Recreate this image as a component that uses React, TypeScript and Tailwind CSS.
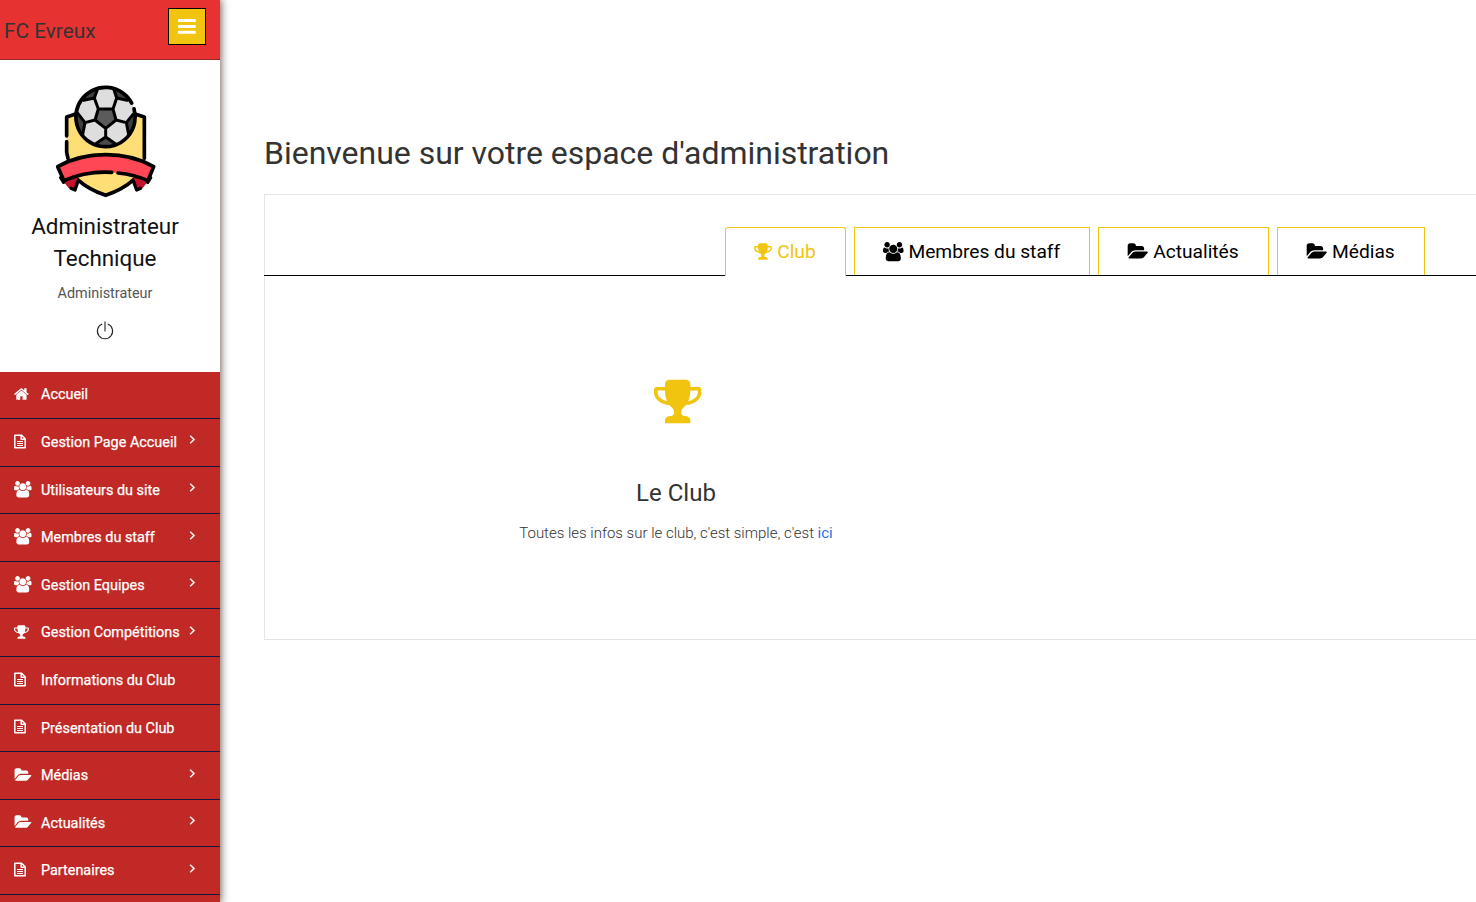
import React from "react";

type IconName = "home" | "file" | "users" | "trophy" | "folder" | "bars" | "angle";

const ICONS: Record<Exclude<IconName, "file">, { box: string; ratio: number; d: string }> = {
  home: {
    box: "64 0 1664 1792",
    ratio: 1664 / 1792,
    d: "M1472 992v480q0 26-19 45t-45 19h-384v-384h-256v384h-384q-26 0-45-19t-19-45v-480q0-1 .5-3t.5-3l575-474 575 474q1 2 1 6zm223-69l-62 74q-8 9-21 11h-3q-13 0-21-7l-692-577-692 577q-12 8-24 7-13-2-21-11l-62-74q-8-10-7-23.5t11-21.5l719-599q32-26 76-26t76 26l244 204v-195q0-14 9-23t23-9h192q14 0 23 9t9 23v408l219 182q10 8 11 21.5t-7 23.5z",
  },
  users: {
    box: "64 0 1920 1792",
    ratio: 1920 / 1792,
    d: "M657 896q-162 5-265 128h-134q-82 0-138-40.5t-56-118.5q0-353 124-353 6 0 43.5 21t97.5 42.5 119 21.5q67 0 133-23-5 37-5 66 0 139 81 256zm1071 637q0 120-73 189.5t-194 69.5h-874q-121 0-194-69.5t-73-189.5q0-53 3.5-103.5t14-109 26.5-108.5 43-97.5 62-81 85.5-53.5 111.5-20q10 0 43 21.5t73 48 107 48 135 21.5 135-21.5 107-48 73-48 43-21.5q61 0 111.5 20t85.5 53.5 62 81 43 97.5 26.5 108.5 14 109 3.5 103.5zm-1024-1277q0 106-75 181t-181 75-181-75-75-181 75-181 181-75 181 75 75 181zm704 384q0 159-112.5 271.5t-271.5 112.5-271.5-112.5-112.5-271.5 112.5-271.5 271.5-112.5 271.5 112.5 112.5 271.5zm576 225q0 78-56 118.5t-138 40.5h-134q-103-123-265-128 81-117 81-256 0-29-5-66 66 23 133 23 59 0 119-21.5t97.5-42.5 43.5-21q124 0 124 353zm-128-609q0 106-75 181t-181 75-181-75-75-181 75-181 181-75 181 75 75 181z",
  },
  trophy: {
    box: "64 0 1664 1792",
    ratio: 1664 / 1792,
    d: "M522 883q-74-162-74-371h-256v96q0 78 94.5 162t235.5 113zm1078-275v-96h-256q0 209-74 371 141-29 235.5-113t94.5-162zm128-128v128q0 71-41.5 143t-112 130-173 97.5-215.5 44.5q-42 54-95 95-38 34-52.5 72.5t-14.5 89.5q0 54 30.5 91t97.5 37q75 0 133.5 45.5t58.5 114.5v64q0 14-9 23t-23 9h-832q-14 0-23-9t-9-23v-64q0-69 58.5-114.5t133.5-45.5q67 0 97.5-37t30.5-91q0-51-14.5-89.5t-52.5-72.5q-53-41-95-95-113-5-215.5-44.5t-173-97.5-112-130-41.5-143v-128q0-40 28-68t68-28h288v-96q0-66 47-113t113-47h576q66 0 113 47t47 113v96h288q40 0 68 28t28 68z",
  },
  folder: {
    box: "0 0 1943 1792",
    ratio: 1943 / 1792,
    d: "M1943 952q0 31-31 66l-336 396q-43 51-120.5 86.5t-143.5 35.5h-1088q-34 0-60.5-13t-26.5-43q0-31 31-66l336-396q43-51 120.5-86.5t143.5-35.5h1088q34 0 60.5 13t26.5 43zm-343-344v160h-832q-94 0-197 47.5t-164 119.5l-337 396-5 6q0-4-.5-12.5t-.5-12.5v-960q0-92 66-158t158-66h320q92 0 158 66t66 158v32h544q92 0 158 66t66 158z",
  },
  bars: {
    box: "128 0 1536 1792",
    ratio: 1536 / 1792,
    d: "M1664 1344v128q0 26-19 45t-45 19h-1408q-26 0-45-19t-19-45v-128q0-26 19-45t45-19h1408q26 0 45 19t19 45zm0-512v128q0 26-19 45t-45 19h-1408q-26 0-45-19t-19-45v-128q0-26 19-45t45-19h1408q26 0 45 19t19 45zm0-512v128q0 26-19 45t-45 19h-1408q-26 0-45-19t-19-45v-128q0-26 19-45t45-19h1408q26 0 45 19t19 45z",
  },
  angle: {
    box: "576 0 640 1792",
    ratio: 640 / 1792,
    d: "M1171 960q0 13-10 23l-466 466q-10 10-23 10t-23-10l-50-50q-10-10-10-23t10-23l393-393-393-393q-10-10-10-23t10-23l50-50q10-10 23-10t23 10l466 466q10 10 10 23z",
  },
};

function Icon({ name, size, className = "" }: { name: IconName; size: number; className?: string }) {
  if (name === "file") {
    return (
      <svg
        width="12"
        height="15"
        viewBox="0 0 12 15"
        fill="none"
        stroke="currentColor"
        strokeLinejoin="round"
        className={`shrink-0 ${className}`}
        aria-hidden="true"
      >
        <path d="M.8 1.2H7.6L11.2 4.8V13.8H.8ZM7.2 1.2V5.2H11.2" strokeWidth="1.5" />
        <path d="M3 7.5H9M3 9.5H9M3 11.5H9" strokeWidth="1" />
      </svg>
    );
  }
  const icon = ICONS[name];
  return (
    <svg
      width={size * icon.ratio}
      height={size}
      viewBox={icon.box}
      fill="currentColor"
      className={`shrink-0 overflow-visible ${className}`}
      aria-hidden="true"
    >
      <path d={icon.d} />
    </svg>
  );
}

function Crest() {
  return (
    <svg width="120" height="130" viewBox="0 0 360 390" aria-hidden="true" strokeLinecap="round" strokeLinejoin="round">
      <path d="M65 126 L100 113 H260 L298 126 V250 C298 310 240 340 182 361 C124 340 65 310 65 250Z" fill="#ffde76" />
      <path d="M65 183V126L92 117M270 117L298 126V250M65 200V232L69 250M97 313C120 334 150 350 182 361C214 350 244 334 267 313" fill="none" stroke="#000" strokeWidth="11" />
      <path d="M47 308 L93 296 L99 317 L90 345 L70 338Z" fill="#c4122f" />
      <path d="M317 308 L271 296 L265 317 L275 345 L294 338Z" fill="#c4122f" />
      <path d="M47 308L56 322M99 318L90 345L78 340M317 308L308 322M265 318L275 345L287 340" fill="none" stroke="#000" strokeWidth="10" />
      <path d="M38 275C80 251 130 239 182 239C234 239 284 251 326 275L309 317C270 300 226 292 182 292C138 292 96 300 57 317Z" fill="#ff4755" />
      <path d="M200 292C150 289 100 298 57 317L38 275C80 251 130 239 182 239C234 239 284 251 326 275L309 317C280 304 250 297 219 294" fill="none" stroke="#000" strokeWidth="11" />
      <circle cx="181.5" cy="126" r="89" fill="#dedede" />
      <path d="M160 102H204L213 135L182 160L150 135Z" fill="#5b5b5b" />
      <path d="M117 60C128 49 139 43 158 39L149 68L117 75Z" fill="#3f3f3f" />
      <path d="M206 39C224 43 237 50 250 62L243 75L214 68Z" fill="#3f3f3f" />
      <path d="M95 112L119 142L112 176C98 159 92 141 95 112Z" fill="#3f3f3f" />
      <path d="M269 112L245 142L252 176C266 159 272 141 269 112Z" fill="#3f3f3f" />
      <path d="M182 186L212 208C192 216 172 216 151 208Z" fill="#4a4a4a" />
      <path
        d="M160 102H204L213 135L182 160L150 135ZM160 102L148 69L158 41M148 69L116 76M204 102L215 69L206 41M215 69L246 76M150 135L120 143L96 112M120 143L113 178M213 135L244 143L264 118M244 143L251 178M182 160V186M182 186L150 208M182 186L213 208"
        fill="none"
        stroke="#000"
        strokeWidth="9"
      />
      <path d="M260.1 84.2A89 89 0 1 0 267.1 101.5" fill="none" stroke="#000" strokeWidth="11" />
    </svg>
  );
}

const MENU: { icon: IconName; label: string; arrow?: boolean }[] = [
  { icon: "home", label: "Accueil" },
  { icon: "file", label: "Gestion Page Accueil", arrow: true },
  { icon: "users", label: "Utilisateurs du site", arrow: true },
  { icon: "users", label: "Membres du staff", arrow: true },
  { icon: "users", label: "Gestion Equipes", arrow: true },
  { icon: "trophy", label: "Gestion Compétitions", arrow: true },
  { icon: "file", label: "Informations du Club" },
  { icon: "file", label: "Présentation du Club" },
  { icon: "folder", label: "Médias", arrow: true },
  { icon: "folder", label: "Actualités", arrow: true },
  { icon: "file", label: "Partenaires", arrow: true },
  { icon: "file", label: "" },
];

function Sidebar() {
  return (
    <aside className="z-10 flex h-full w-[220px] shrink-0 flex-col overflow-hidden bg-[#c12926]">
      <header className="flex h-[60px] shrink-0 items-start justify-between border-b border-[#8f2a28] bg-[#e63230] pr-[14px] pl-1">
        <span className="pt-[15px] text-[20.8px] leading-8 text-[#333]">FC Evreux</span>
        <button className="mt-2 flex h-[37px] w-[38px] items-center justify-center border border-black bg-[#f1c40f] text-white">
          <Icon name="bars" size={20.8} className="-mt-px" />
        </button>
      </header>
      <section className="flex h-[311.6px] shrink-0 flex-col items-center bg-white pr-[10px]">
        <div className="mt-[15px] h-[130px] w-[120px]">
          <Crest />
        </div>
        <h2 className="mt-[5px] w-[180px] text-center text-[22.4px] leading-8 text-[#111]">
          Administrateur Technique
        </h2>
        <p className="mt-[10px] text-[14.4px] leading-5 text-[#555]">Administrateur</p>
        <svg width="18" height="20" viewBox="0 0 18 20" fill="none" stroke="#222" className="mt-[17px] mr-px" aria-hidden="true">
          <path d="M6.2 3.1A7.6 7.6 0 1 0 11.8 3.1M9 .5V10.5" strokeWidth="1.1" />
        </svg>
      </section>
      <nav>
        {MENU.map((item, i) => (
          <a key={i} className="flex h-[47.58px] items-center border-b border-[#14173f] pl-[14px] text-white">
            <span className="-mt-[2px] flex w-[27px] items-center">
              <Icon name={item.icon} size={item.icon === "users" ? 16.4 : 16} className={item.icon === "folder" ? "-ml-[0.5px]" : ""} />
            </span>
            <span className="w-[148.5px] pt-[0.8px] text-[14.4px] whitespace-nowrap [-webkit-text-stroke:0.25px_white]">
              {item.label}
            </span>
            {item.arrow && <Icon name="angle" size={14} className="-mt-[6px] stroke-current stroke-[70px]" />}
          </a>
        ))}
      </nav>
    </aside>
  );
}

const TABS: { icon: IconName; label: string; width: string }[] = [
  { icon: "trophy", label: "Club", width: "w-[121px]" },
  { icon: "users", label: "Membres du staff", width: "w-[236px]" },
  { icon: "folder", label: "Actualités", width: "w-[171px]" },
  { icon: "folder", label: "Médias", width: "w-[148px]" },
];

export default function App() {
  return (
    <div className="flex h-[902px] w-full overflow-hidden bg-white font-['Roboto',sans-serif]">
      <div className="z-10 flex h-full shrink-0 shadow-[0_0_8px_1px_rgba(60,40,30,0.75)]">
        <Sidebar />
      </div>
      <main className="min-w-0 flex-1 overflow-hidden pt-[133px] pl-11">
        <h1 className="text-[32px] leading-10 tracking-[-0.02px] text-[#333]">
          Bienvenue sur votre espace d'administration
        </h1>
        <div className="mt-[21px] h-[446px] w-[1622px] border border-[#e4e4e4]">
          <div className="-ml-px flex h-[81px] items-end justify-center gap-2 border-b border-black">
            {TABS.map((tab, i) => (
              <button
                key={tab.label}
                className={`flex items-center justify-center gap-[5px] border border-b-0 border-[#f1c40f] bg-white text-[19.2px] whitespace-nowrap ${tab.width} ${
                  i === 0 ? "-mb-px h-[49px] rounded-t-[3px] text-[#f1c40f]" : "h-12 pt-px text-black"
                }`}
              >
                <Icon name={tab.icon} size={19.2} />
                <span>{tab.label}</span>
              </button>
            ))}
          </div>
          <section className="flex w-[822px] flex-col items-center pt-[100px]">
            <Icon name="trophy" size={51} className="ml-1 text-[#f1c40f]" />
            <h3 className="mt-[50px] text-2xl leading-8 text-[#333]">Le Club</h3>
            <p className="mt-3 text-[15px] leading-6 font-light text-[#333]">
              Toutes les infos sur le club, c'est simple, c'est <a className="font-normal text-[#1a73e8]">ici</a>
            </p>
          </section>
        </div>
      </main>
    </div>
  );
}
